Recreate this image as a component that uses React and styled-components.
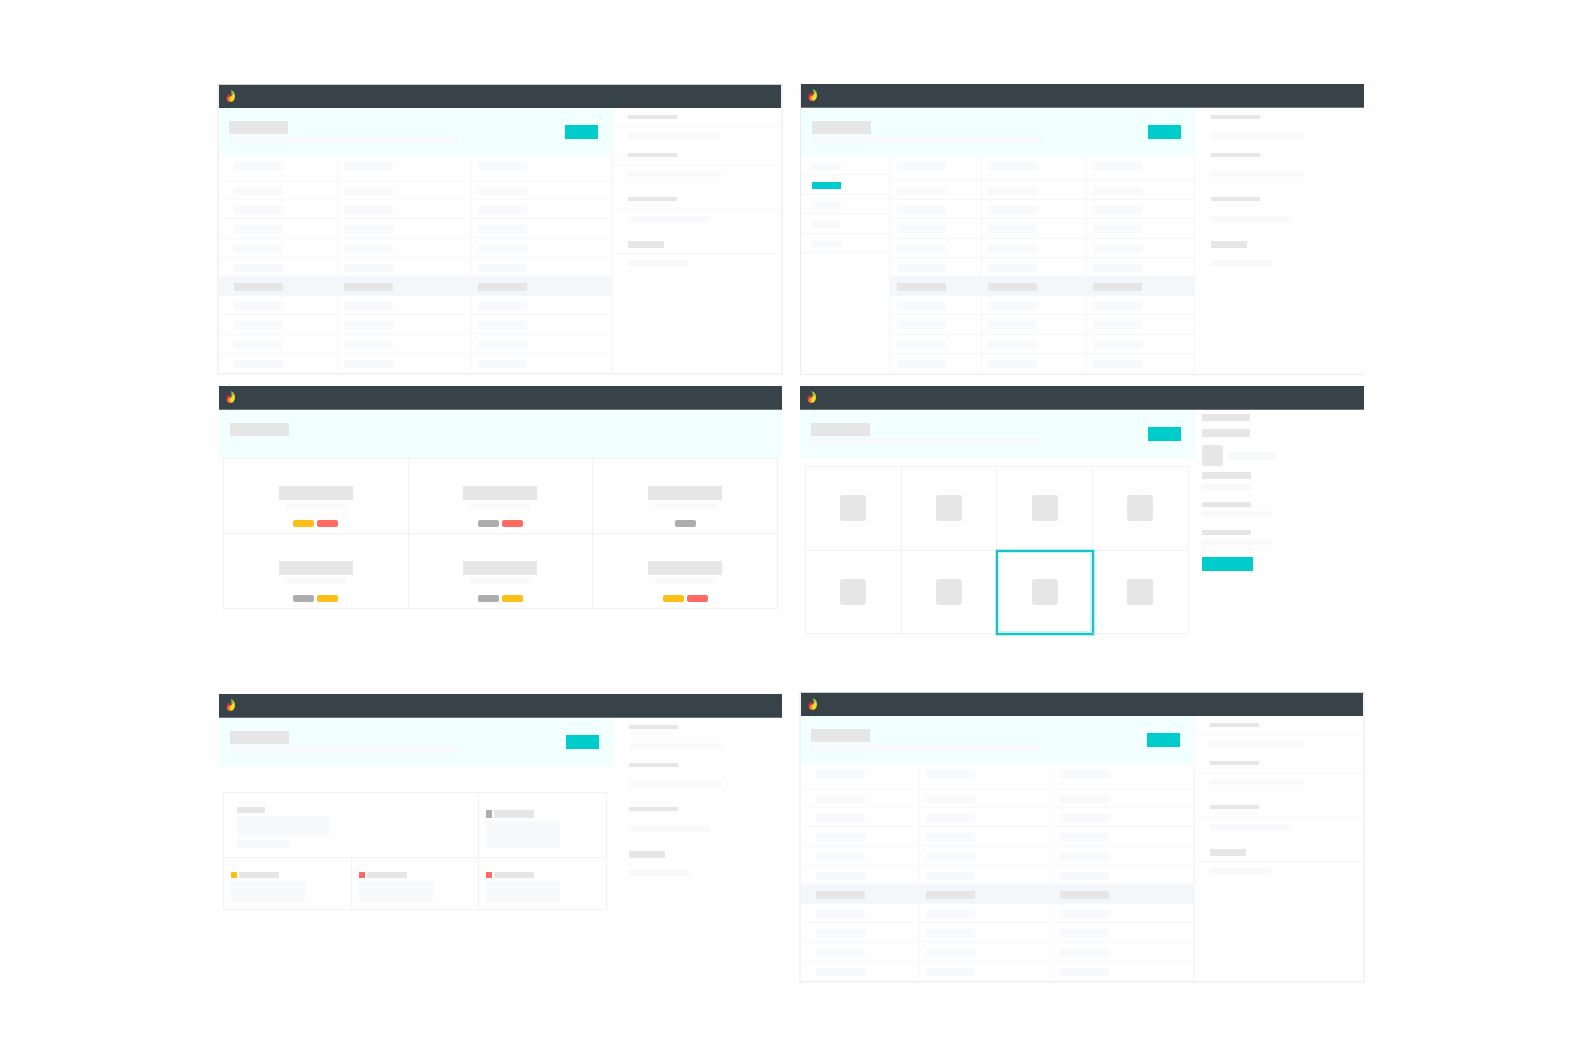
import React from "react";
import styled, { createGlobalStyle, css } from "styled-components";

const color = {
  bar: "#384249",
  barEdge: "#6c7478",
  header: "#f2ffff",
  teal: "#00cccc",
  strong: "#e6e6e6",
  soft: "#f8f9fb",
  line: "#f8f8fa",
  navLine: "#f5f6f9",
  card: "#f2f2f2",
  row: "#f4f7fa",
  yellow: "#fcbf17",
  red: "#ff6a62",
  gray: "#adadad",
};

const GlobalStyle = createGlobalStyle`
  *, *::before, *::after { box-sizing: border-box; }
  body {
    margin: 0;
    background: #fefefe;
    font-family: "Liberation Sans", Arial, sans-serif;
  }
`;

const Gallery = styled.main`
  display: grid;
  grid-template-columns: 1fr 1fr;
  column-gap: 16px;
  padding: 84px 215px 80px 217px;
`;

const Column = styled.div`
  display: flex;
  flex-direction: column;
  gap: 11px;
  min-width: 0;
`;

const frames = {
  full: css`
    border: solid #f4f4f4;
    border-width: 1px 2px 2px;
    border-top-color: #ccd0d1;
    --bar: 23px;
    --edge: ${color.bar};
    --inset: 10px;
  `,
  open: css`
    margin: 0 1px;
    border: solid #ebebec;
    border-width: 0 0 1px 1px;
    --bar: 24px;
    --edge: ${color.barEdge};
    --inset: 11px;
  `,
  plain: css`
    margin: 0 1px 0 2px;
    --bar: 24px;
    --edge: ${color.barEdge};
    --inset: 11px;
  `,
  bleed: css`
    margin: 0 1px;
    --bar: 24px;
    --edge: ${color.barEdge};
    --inset: 11px;
  `,
};

const Screen = styled.section`
  display: flex;
  flex-direction: column;
  min-height: ${(p) => p.$height}px;
  ${(p) => frames[p.$frame]}
`;

const TopBar = styled.div`
  display: flex;
  align-items: center;
  height: var(--bar);
  padding-left: 7px;
  background: ${color.bar};
  border-bottom: 1px solid var(--edge);
`;

const Split = styled.div`
  display: grid;
  grid-template-columns: 7fr 3fr;
  flex: 1;
`;

const Content = styled.div`
  min-width: 0;
`;

const Header = styled.header`
  display: flex;
  justify-content: space-between;
  align-items: flex-start;
  height: 48px;
  padding: 13px 14px 0 var(--inset);
  background: ${color.header};
`;

const Stack = styled.div`
  display: flex;
  flex-direction: column;
  align-items: ${(p) => (p.$center ? "center" : "flex-start")};
  gap: ${(p) => p.$gap}px;
`;

const Block = styled.div`
  width: ${(p) => p.$w}px;
  height: ${(p) => p.$h}px;
  border-radius: ${(p) => p.$radius || 0}px;
  background: ${(p) => color[p.$tone || "soft"]};
`;

const Action = styled.button`
  display: block;
  width: ${(p) => (p.$wide ? 51 : 33)}px;
  height: 14px;
  padding: 0;
  border: 0;
  margin-top: ${(p) => (p.$wide ? 12 : 4)}px;
  background: ${color.teal};
  cursor: pointer;
`;

const Table = styled.table`
  display: grid;
  height: 217px;
  grid-template-rows: 25px 1fr;
`;

const TableHead = styled.thead`
  display: grid;
`;

const TableBody = styled.tbody`
  display: grid;
  grid-template-rows: repeat(10, 1fr);
`;

const columnSets = {
  wide: "119fr 134fr 140fr",
  narrow: "92fr 104fr 108fr",
};

const Row = styled.tr`
  display: grid;
  grid-template-columns: ${(p) => columnSets[p.$columns]};
  background: ${(p) => (p.$active ? color.row : "transparent")};

  & > * {
    padding: 6px 0 0 6px;
    border: solid ${(p) => (p.$active ? color.row : p.$columns === "narrow" ? color.navLine : color.line)};
    border-width: 0 1px 1px 0;
  }

  & > :first-child {
    padding-left: ${(p) => (p.$columns === "wide" ? 15 : 7)}px;
  }
`;

const WithNav = styled.div`
  display: grid;
  grid-template-columns: 89fr 304fr;
`;

const Nav = styled.nav`
  display: flex;
  flex-direction: column;
  border-right: 1px solid ${color.navLine};
`;

const NavList = styled.div`
  display: grid;
  grid-template-rows: repeat(5, 1fr);
  height: 97px;
`;

const NavLink = styled.a`
  padding: 7px 0 0 11px;
  border-bottom: 1px solid ${color.navLine};
`;

const Aside = styled.aside`
  border-left: ${(p) => (p.$ruled ? `1px solid ${color.line}` : "0")};
`;

const Detail = styled.div`
  padding-top: ${(p) => p.$before}px;
`;

const DetailHead = styled.div`
  padding: 0 0 ${(p) => p.$after}px ${(p) => (p.$ruled ? 15 : 16)}px;
  border-bottom: 1px solid ${(p) => (p.$ruled ? color.line : "transparent")};
`;

const DetailBody = styled.div`
  padding: 6px 0 0 ${(p) => (p.$ruled ? 15 : 16)}px;
`;

const Cards = styled.div`
  display: grid;
  grid-template-columns: repeat(3, 1fr);
  grid-auto-rows: 75px;
  margin: 0 4px;
  border: solid ${color.card};
  border-width: 1px 0 0 1px;
`;

const Card = styled.article`
  padding-top: 27px;
  border: solid ${color.card};
  border-width: 0 1px 1px 0;
`;

const Tags = styled.div`
  display: flex;
  gap: 3px;
  padding-top: 8px;
`;

const Tiles = styled.div`
  display: grid;
  grid-template-columns: repeat(4, 1fr);
  grid-template-rows: 1fr 1fr;
  height: 168px;
  margin: 8px 6px 0 5px;
  border: solid ${color.card};
  border-width: 1px 0 0 1px;
`;

const Tile = styled.button`
  display: flex;
  align-items: center;
  justify-content: center;
  padding: 0;
  background: transparent;
  border: solid ${color.card};
  border-width: 0 1px 1px 0;
  cursor: pointer;
  ${(p) =>
    p.$selected &&
    css`
      outline: 2px solid #19c3c3;
      outline-offset: -1px;
      box-shadow: 0 0 0 2px #b5f3f2, inset 0 0 0 2px #c5f7f6;
    `}
`;

const Profile = styled.aside`
  padding: 4px 0 0 7px;
`;

const Person = styled.div`
  display: flex;
  align-items: center;
  gap: 5px;
  margin: 8px 0 6px;
`;

const Pair = styled.div`
  margin-bottom: ${(p) => p.$after}px;
`;

const Board = styled.div`
  display: grid;
  grid-template-columns: repeat(3, 1fr);
  grid-template-rows: 65px 52px;
  margin: 26px 6px 0 4px;
  border: solid ${color.card};
  border-width: 1px 0 0 1px;
`;

const Panel = styled.article`
  grid-column: span ${(p) => (p.$lead ? 2 : 1)};
  padding: ${(p) => (p.$tall ? 17 : 14)}px 0 0 ${(p) => (p.$lead ? 13 : 7)}px;
  border: solid ${color.card};
  border-width: 0 1px 1px 0;
`;

const PanelLabel = styled.div`
  display: flex;
  gap: 2px;
`;

function Logo() {
  return (
    <svg width="10" height="13" viewBox="0 0 20 26" aria-hidden="true">
      <path d="M9 1 C14 0 19 7 18 14 C17 21 13 25 8 24 L8 14 C12 12 13 7 9 1Z" fill="#c3cf35" />
      <path d="M9 0 C14 4 15 8 12 12 L10 9 C11 6 11 4 9 0Z" fill="#5f9a3c" />
      <path d="M1 13 C2 10 5 8 8 7 C7 11 9 12 9 15 L5 23 C1 21 0 17 1 13Z" fill="#d52b4c" />
      <path d="M3 17 C5 13 8 13 10 12 L14 20 C11 25 5 25 3 21Z" fill="#f2802c" />
      <path d="M8 15 C12 13 13 10 14 7 C18 12 18 19 13 22 C10 23 6 19 8 15Z" fill="#fbd928" />
    </svg>
  );
}

function Bar() {
  return (
    <TopBar>
      <Logo />
    </TopBar>
  );
}

function PageHeader({ simple }) {
  return (
    <Header>
      <Stack $gap={2}>
        <Block $w={59} $h={13} $tone="strong" />
        {!simple && <Block $w={229} $h={7} />}
      </Stack>
      {!simple && <Action type="button" aria-label="Create" />}
    </Header>
  );
}

function Records({ columns }) {
  const cells = [0, 1, 2];
  return (
    <Table>
      <TableHead>
        <Row $columns={columns}>
          {cells.map((c) => (
            <th key={c} scope="col">
              <Block $w={49} $h={8} />
            </th>
          ))}
        </Row>
      </TableHead>
      <TableBody>
        {Array.from({ length: 10 }, (_, r) => (
          <Row key={r} $columns={columns} $active={r === 5}>
            {cells.map((c) => (
              <td key={c}>
                <Block $w={49} $h={8} $tone={r === 5 ? "strong" : "soft"} />
              </td>
            ))}
          </Row>
        ))}
      </TableBody>
    </Table>
  );
}

const details = [
  { before: 7, head: [49, 4], after: 7, body: 93 },
  { before: 14, head: [49, 4], after: 7, body: 93 },
  { before: 20, head: [49, 4], after: 8, body: 81 },
  { before: 19, head: [36, 7], after: 5, body: 61 },
];

function Details({ ruled }) {
  return (
    <Aside $ruled={ruled}>
      {details.map((d, i) => (
        <Detail key={i} $before={d.before}>
          <DetailHead $after={d.after} $ruled={ruled}>
            <Block $w={d.head[0]} $h={d.head[1]} $tone="strong" />
          </DetailHead>
          <DetailBody $ruled={ruled}>
            <Block $w={d.body} $h={6} />
          </DetailBody>
        </Detail>
      ))}
    </Aside>
  );
}

function ListScreen() {
  return (
    <Screen $frame="full" $height={291}>
      <Bar />
      <Split>
        <Content>
          <PageHeader />
          <Records columns="wide" />
        </Content>
        <Details ruled />
      </Split>
    </Screen>
  );
}

function NavScreen() {
  return (
    <Screen $frame="open" $height={291}>
      <Bar />
      <Split>
        <Content>
          <PageHeader />
          <WithNav>
            <Nav aria-label="Sections">
              <NavList>
                {[0, 1, 2, 3, 4].map((i) => (
                  <NavLink key={i} href="#" aria-label={`Section ${i + 1}`}>
                    <Block $w={29} $h={7} $tone={i === 1 ? "teal" : "soft"} />
                  </NavLink>
                ))}
              </NavList>
            </Nav>
            <Records columns="narrow" />
          </WithNav>
        </Content>
        <Details />
      </Split>
    </Screen>
  );
}

const cardTags = [
  ["yellow", "red"],
  ["gray", "red"],
  ["gray"],
  ["gray", "yellow"],
  ["gray", "yellow"],
  ["yellow", "red"],
];

function CardScreen() {
  return (
    <Screen $frame="plain" $height={297}>
      <Bar />
      <PageHeader simple />
      <Cards>
        {cardTags.map((tags, i) => (
          <Card key={i}>
            <Stack $gap={3} $center>
              <Block $w={74} $h={14} $tone="strong" />
              <Block $w={61} $h={6} />
              <Tags>
                {tags.map((tone) => (
                  <Block key={tone} $w={21} $h={7} $radius={2} $tone={tone} />
                ))}
              </Tags>
            </Stack>
          </Card>
        ))}
      </Cards>
    </Screen>
  );
}

function TileScreen() {
  return (
    <Screen $frame="bleed" $height={295}>
      <Bar />
      <Split>
        <Content>
          <PageHeader />
          <Tiles>
            {Array.from({ length: 8 }, (_, i) => (
              <Tile key={i} type="button" aria-label={`Item ${i + 1}`} $selected={i === 6}>
                <Block $w={26} $h={26} $radius={3} $tone="strong" />
              </Tile>
            ))}
          </Tiles>
        </Content>
        <Profile>
          <Stack $gap={8}>
            <Block $w={48} $h={7} $tone="strong" />
            <Block $w={48} $h={8} $tone="strong" />
          </Stack>
          <Person>
            <Block $w={21} $h={21} $radius={3} $tone="strong" />
            <Block $w={48} $h={8} />
          </Person>
          <Pair $after={12}>
            <Stack $gap={5}>
              <Block $w={49} $h={7} $tone="strong" />
              <Block $w={49} $h={6} />
            </Stack>
          </Pair>
          <Pair $after={13}>
            <Stack $gap={4}>
              <Block $w={49} $h={5} $tone="strong" />
              <Block $w={70} $h={6} />
            </Stack>
          </Pair>
          <Stack $gap={4}>
            <Block $w={49} $h={5} $tone="strong" />
            <Block $w={70} $h={6} />
          </Stack>
          <Action type="button" aria-label="Save" $wide />
        </Profile>
      </Split>
    </Screen>
  );
}

function StatusPanel({ tone, tall }) {
  const size = tall ? 8 : 6;
  return (
    <Panel $tall={tall}>
      <Stack $gap={3}>
        <PanelLabel>
          <Block $w={6} $h={size} $tone={tone} />
          <Block $w={40} $h={size} $tone="strong" />
        </PanelLabel>
        <Block $w={74} $h={tall ? 27 : 21} />
      </Stack>
    </Panel>
  );
}

function BoardScreen() {
  return (
    <Screen $frame="plain" $height={291}>
      <Bar />
      <Split>
        <Content>
          <PageHeader />
          <Board>
            <Panel $lead>
              <Stack $gap={3}>
                <Block $w={28} $h={6} $tone="strong" />
                <Block $w={92} $h={21} />
                <Block $w={53} $h={8} />
              </Stack>
            </Panel>
            <StatusPanel tone="gray" tall />
            <StatusPanel tone="yellow" />
            <StatusPanel tone="red" />
            <StatusPanel tone="red" />
          </Board>
        </Content>
        <Details />
      </Split>
    </Screen>
  );
}

export default function App() {
  return (
    <>
      <GlobalStyle />
      <Gallery>
        <Column>
          <ListScreen />
          <CardScreen />
          <BoardScreen />
        </Column>
        <Column>
          <NavScreen />
          <TileScreen />
          <ListScreen />
        </Column>
      </Gallery>
    </>
  );
}
